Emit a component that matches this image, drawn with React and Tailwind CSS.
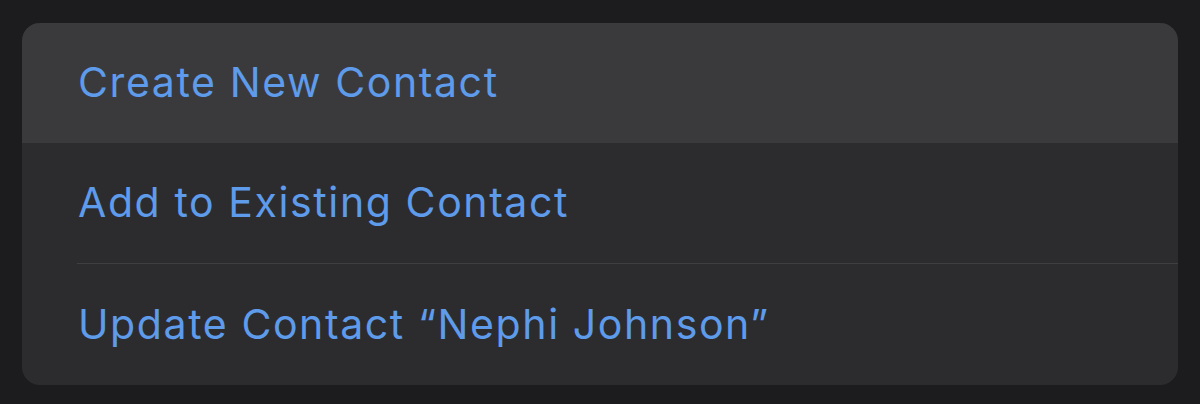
export default function App() {
  const font = { fontFamily: 'Inter, "Noto Sans", sans-serif' };
  return (
    <div className="w-[1200px] h-[404px] bg-[#1c1c1e] pt-[23px] pl-[22px] pr-[22px]" style={font}>
      <div className="w-[1156px] h-[362px] rounded-[18px] overflow-hidden bg-[#2c2c2e] flex flex-col">
        <div className="h-[120px] bg-[#3a3a3c] flex items-center pl-[56px]">
          <span className="text-[41px] text-[#5e9bea] tracking-[1.6px]">Create New Contact</span>
        </div>
        <div className="h-[120px] flex items-center pl-[56px] relative">
          <span className="text-[41px] text-[#5e9bea] tracking-[1.6px]">Add to Existing Contact</span>
        </div>
        <div className="ml-[55px] h-px bg-[#3f3f42]" />
        <div className="flex-1 flex items-center pl-[56px]">
          <span className="text-[41px] text-[#5e9bea] tracking-[1.6px]">Update Contact “Nephi Johnson”</span>
        </div>
      </div>
    </div>
  );
}
